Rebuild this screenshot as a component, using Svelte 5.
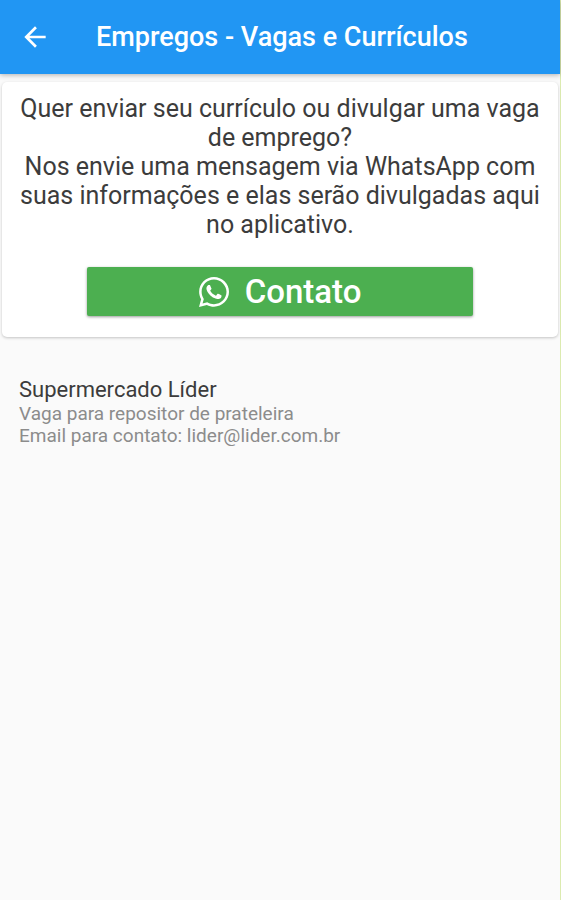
<script>
  const jobs = [
    {
      id: 1,
      company: 'Supermercado Líder',
      details: ['Vaga para repositor de prateleira', 'Email para contato: lider@lider.com.br']
    }
  ];

  function goBack() {
    history.back();
  }
</script>

<div class="screen">
  <header class="app-bar">
    <button class="back" aria-label="Voltar" onclick={goBack}>
      <svg width="32" height="32" viewBox="0 0 24 24" fill="currentColor">
        <path d="M20 11H7.83l5.59-5.59L12 4l-8 8 8 8 1.41-1.41L7.83 13H20v-2z"/>
      </svg>
    </button>
    <h1>Empregos - Vagas e Currículos</h1>
  </header>

  <main>
    <section class="card">
      <p class="message">
        Quer enviar seu currículo ou divulgar uma vaga de emprego?<br />
        Nos envie uma mensagem via WhatsApp com suas informações e elas serão divulgadas aqui no aplicativo.
      </p>
      <button class="contact">
        <svg width="30" height="30" viewBox="0 0 448 448" fill="currentColor" aria-hidden="true">
          <path d="M380.9 65.1C339 23.1 283.200 0 223.900 0 101.500 0 1.900 99.600 1.900 222c0 39.100 10.200 77.300 29.600 111L0 448l117.700-30.900c32.400 17.700 68.900 27 106.100 27h.1c122.300 0 224.100-99.600 224.100-222 0-59.300-25.200-115-67.100-157zM223.900 406.700c-33.200 0-65.700-8.900-94-25.700l-6.700-4-69.800 18.300L72 327.200l-4.400-7c-18.500-29.400-28.200-63.300-28.200-98.200 0-101.700 82.800-184.500 184.600-184.500 49.300 0 95.600 19.200 130.400 54.100 34.800 34.900 56.200 81.200 56.100 130.500 0 101.800-84.900 184.600-186.600 184.600z"/>
          <path d="M325.100 268.500c-5.500-2.800-32.800-16.200-37.900-18-5.100-1.900-8.800-2.800-12.500 2.800-3.700 5.600-14.300 18-17.600 21.800-3.200 3.700-6.500 4.200-12 1.400-32.600-16.300-54-29.100-75.500-66-5.700-9.800 5.700-9.100 16.300-30.300 1.800-3.700.9-6.900-.5-9.700-1.400-2.800-12.500-30.100-17.100-41.200-4.500-10.800-9.100-9.300-12.500-9.500-3.200-.2-6.900-.2-10.600-.2-3.700 0-9.700 1.400-14.800 6.900-5.100 5.600-19.400 19-19.400 46.300 0 27.300 19.900 53.700 22.600 57.400 2.800 3.700 39.100 59.700 94.800 83.800 35.200 15.200 49 16.500 66.600 13.900 10.700-1.600 32.800-13.400 37.400-26.400 4.600-13 4.600-24.100 3.200-26.400-1.300-2.500-5-3.900-10.500-6.600z"/>
        </svg>
        <span>Contato</span>
      </button>
    </section>

    <ul class="jobs">
      {#each jobs as job (job.id)}
        <li>
          <h2>{job.company}</h2>
          {#each job.details as line}
            <p>{line}</p>
          {/each}
        </li>
      {/each}
    </ul>
  </main>
</div>

<style>
  :global(body) {
    background: #fafafa;
    font-family: Roboto, "Liberation Sans", sans-serif;
  }

  .screen {
    box-sizing: border-box;
    min-height: 100vh;
    border-right: 1px solid #dcebb0;
  }

  .app-bar {
    display: flex;
    align-items: center;
    gap: 44px;
    height: 74px;
    padding: 0 18px;
    background: #2196f3;
    color: #fff;
    box-shadow: 0 1px 5px rgba(0, 0, 0, 0.3);
  }

  .back {
    display: flex;
    padding: 1px;
    border: 0;
    background: none;
    color: inherit;
    cursor: pointer;
  }

  h1 {
    margin: 0;
    font-size: 27px;
    font-weight: 500;
    line-height: 32px;
  }

  main { padding: 8px 2px; }

  .card {
    display: flex;
    flex-direction: column;
    align-items: center;
    gap: 28px;
    padding: 12px 14px 21px;
    border-radius: 5px;
    background: #fff;
    box-shadow: 0 1px 3px rgba(0, 0, 0, 0.22);
  }

  .message {
    margin: 0;
    color: #3c3c3c;
    font-size: 25px;
    line-height: 29px;
    text-align: center;
  }

  .contact {
    display: flex;
    align-items: center;
    justify-content: center;
    gap: 16px;
    width: 73%;
    height: 49px;
    padding: 0;
    border: 0;
    border-radius: 2px;
    background: #4caf50;
    color: #fff;
    font-family: inherit;
    font-size: 33px;
    font-weight: 500;
    box-shadow: 0 1px 3px rgba(0, 0, 0, 0.4);
    cursor: pointer;
  }

  .jobs {
    margin: 0;
    padding: 40px 17px;
    list-style: none;
  }

  h2 {
    margin: 0;
    color: #3c3c3c;
    font-size: 22px;
    font-weight: 400;
    line-height: 26px;
  }

  .jobs p {
    margin: 0;
    color: #8c8c8c;
    font-size: 19px;
    line-height: 22px;
  }
</style>
